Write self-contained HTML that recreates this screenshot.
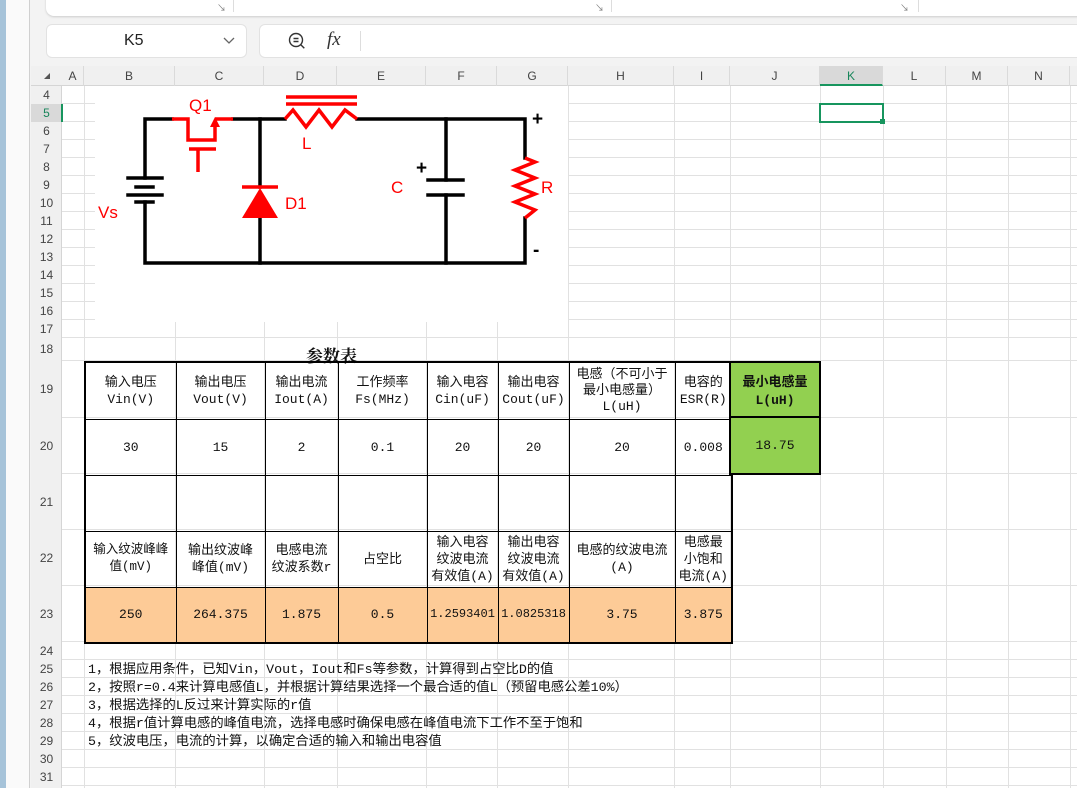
<!DOCTYPE html>
<html style="overflow:hidden"><head><meta charset="utf-8"><style>
*{margin:0;padding:0;box-sizing:border-box}
html,body{width:1077px;height:788px;overflow:hidden}
body{position:relative;background:#f3f3f3;font-family:"Liberation Sans","Noto Sans CJK SC",sans-serif}
.a{position:absolute}
.v{position:absolute;top:86px;height:702px;width:1px;background:#e1e1e1}
.h{position:absolute;left:62px;width:1015px;height:1px;background:#e1e1e1}
.ch{position:absolute;top:66px;height:20px;font-size:12px;color:#444;text-align:center;line-height:20px;border-right:1px solid #dadada}
.rh{position:absolute;left:31px;width:31px;font-size:12px;color:#444;text-align:center}
table{position:absolute;left:84px;top:361px;border-collapse:collapse;border:2px solid #000;font-family:"Liberation Mono","Noto Sans CJK SC",monospace;font-size:13px;color:#111;table-layout:fixed;width:647px}
td{border:1px solid #000;text-align:center;vertical-align:middle;line-height:17px;padding:0;overflow:hidden}
.pe td{background:#fdcb97}
.note{position:absolute;left:88px;white-space:nowrap;font-family:"Liberation Mono","Noto Sans CJK SC",monospace;font-size:13.3px;color:#111;line-height:18px}
</style></head><body>
<div class="a" style="left:0;top:0;width:6px;height:788px;background:#a6c3d9"></div>
<div class="a" style="left:6px;top:0;width:24px;height:788px;background:#fafafa;border-right:1px solid #d0d0d0"></div>
<div class="a" style="left:46px;top:-10px;width:1060px;height:26px;background:#fff;border-radius:8px;box-shadow:0 1px 2px #ccc"></div>
<div class="a" style="left:233px;top:0;width:1px;height:12px;background:#ddd"></div>
<div class="a" style="left:611px;top:0;width:1px;height:12px;background:#ddd"></div>
<div class="a" style="left:918px;top:0;width:1px;height:12px;background:#ddd"></div>
<div class="a" style="left:217px;top:1px;font-size:9px;color:#777">↘</div>
<div class="a" style="left:595px;top:1px;font-size:9px;color:#777">↘</div>
<div class="a" style="left:900px;top:1px;font-size:9px;color:#777">↘</div>
<div class="a" style="left:46px;top:24px;width:201px;height:34px;background:#fff;border:1px solid #e2e2e2;border-radius:6px"></div>
<div class="a" style="left:124px;top:32px;font-size:16px;color:#222">K5</div>
<svg class="a" style="left:222px;top:36px" width="14" height="10"><path d="M2 2 L7 7 L12 2" fill="none" stroke="#666" stroke-width="1.3"/></svg>
<div class="a" style="left:259px;top:24px;width:830px;height:34px;background:#fff;border:1px solid #e2e2e2;border-radius:6px"></div>
<svg class="a" style="left:286px;top:30px" width="22" height="22"><circle cx="10" cy="10" r="6.5" fill="none" stroke="#333" stroke-width="1.4"/><path d="M7.5 8.5h5M7.5 11.5h5M14.8 14.8l3.5 3.5" stroke="#333" stroke-width="1.4"/></svg>
<div class="a" style="left:327px;top:29px;font-size:19px;font-style:italic;font-family:'Liberation Serif',serif;color:#333">fx</div>
<div class="a" style="left:360px;top:31px;width:1px;height:20px;background:#ddd"></div>
<div class="a" style="left:31px;top:66px;width:1046px;height:20px;background:#f0f0f0;border-bottom:1px solid #d5d5d5"></div>
<div class="a" style="left:31px;top:86px;width:31px;height:702px;background:#f0f0f0;border-right:1px solid #d5d5d5"></div>
<svg class="a" style="left:43px;top:72px" width="8" height="8"><path d="M7 1 L7 7 L1 7Z" fill="#555"/></svg>
<div class="a" style="left:62px;top:86px;width:1015px;height:702px;background:#fff"></div>
<div class="ch" style="left:62px;width:22px">A</div>
<div class="ch" style="left:84px;width:91px">B</div>
<div class="ch" style="left:175px;width:89px">C</div>
<div class="ch" style="left:264px;width:73px">D</div>
<div class="ch" style="left:337px;width:89px">E</div>
<div class="ch" style="left:426px;width:71px">F</div>
<div class="ch" style="left:497px;width:71px">G</div>
<div class="ch" style="left:568px;width:106px">H</div>
<div class="ch" style="left:674px;width:56px">I</div>
<div class="ch" style="left:730px;width:90px">J</div>
<div class="ch" style="left:820px;width:63px;background:#d9d9d9;color:#17855a;border-bottom:2px solid #17955e">K</div>
<div class="ch" style="left:883px;width:63px">L</div>
<div class="ch" style="left:946px;width:62px">M</div>
<div class="ch" style="left:1008px;width:62px">N</div>
<div class="v" style="left:84px"></div><div class="v" style="left:175px"></div><div class="v" style="left:264px"></div><div class="v" style="left:337px"></div><div class="v" style="left:426px"></div><div class="v" style="left:497px"></div><div class="v" style="left:568px"></div><div class="v" style="left:674px"></div><div class="v" style="left:730px"></div><div class="v" style="left:820px"></div><div class="v" style="left:883px"></div><div class="v" style="left:946px"></div><div class="v" style="left:1008px"></div><div class="v" style="left:1070px"></div>
<div class="h" style="top:103px"></div><div class="h" style="top:121px"></div><div class="h" style="top:139px"></div><div class="h" style="top:157px"></div><div class="h" style="top:175px"></div><div class="h" style="top:193px"></div><div class="h" style="top:211px"></div><div class="h" style="top:229px"></div><div class="h" style="top:247px"></div><div class="h" style="top:265px"></div><div class="h" style="top:283px"></div><div class="h" style="top:301px"></div><div class="h" style="top:319px"></div><div class="h" style="top:337px"></div><div class="h" style="top:360px"></div><div class="h" style="top:417px"></div><div class="h" style="top:473px"></div><div class="h" style="top:529px"></div><div class="h" style="top:585px"></div><div class="h" style="top:641px"></div><div class="h" style="top:659px"></div><div class="h" style="top:677px"></div><div class="h" style="top:695px"></div><div class="h" style="top:713px"></div><div class="h" style="top:731px"></div><div class="h" style="top:749px"></div><div class="h" style="top:767px"></div><div class="h" style="top:785px"></div>
<div class="rh" style="top:86px;height:18px;line-height:18px">4</div>
<div class="a" style="left:31px;top:104px;width:31px;height:18px;background:#d9d9d9"></div>
<div class="a" style="left:61px;top:104px;width:2px;height:18px;background:#17955e"></div>
<div class="rh" style="top:104px;height:18px;line-height:18px;color:#17855a">5</div>
<div class="rh" style="top:122px;height:18px;line-height:18px">6</div>
<div class="rh" style="top:140px;height:18px;line-height:18px">7</div>
<div class="rh" style="top:158px;height:18px;line-height:18px">8</div>
<div class="rh" style="top:176px;height:18px;line-height:18px">9</div>
<div class="rh" style="top:194px;height:18px;line-height:18px">10</div>
<div class="rh" style="top:212px;height:18px;line-height:18px">11</div>
<div class="rh" style="top:230px;height:18px;line-height:18px">12</div>
<div class="rh" style="top:248px;height:18px;line-height:18px">13</div>
<div class="rh" style="top:266px;height:18px;line-height:18px">14</div>
<div class="rh" style="top:284px;height:18px;line-height:18px">15</div>
<div class="rh" style="top:302px;height:18px;line-height:18px">16</div>
<div class="rh" style="top:320px;height:18px;line-height:18px">17</div>
<div class="rh" style="top:338px;height:23px;line-height:23px">18</div>
<div class="rh" style="top:361px;height:57px;line-height:57px">19</div>
<div class="rh" style="top:418px;height:56px;line-height:56px">20</div>
<div class="rh" style="top:474px;height:56px;line-height:56px">21</div>
<div class="rh" style="top:530px;height:56px;line-height:56px">22</div>
<div class="rh" style="top:586px;height:56px;line-height:56px">23</div>
<div class="rh" style="top:642px;height:18px;line-height:18px">24</div>
<div class="rh" style="top:660px;height:18px;line-height:18px">25</div>
<div class="rh" style="top:678px;height:18px;line-height:18px">26</div>
<div class="rh" style="top:696px;height:18px;line-height:18px">27</div>
<div class="rh" style="top:714px;height:18px;line-height:18px">28</div>
<div class="rh" style="top:732px;height:18px;line-height:18px">29</div>
<div class="rh" style="top:750px;height:18px;line-height:18px">30</div>
<div class="rh" style="top:768px;height:18px;line-height:18px">31</div>
<div class="a" style="left:819px;top:103px;width:65px;height:20px;border:2px solid #17955e"></div>
<div class="a" style="left:880px;top:119px;width:5px;height:5px;background:#17955e"></div>
<svg class="a" style="left:95px;top:86px" width="473" height="236" viewBox="95 86 473 236">
<rect x="95" y="86" width="473" height="236" fill="#fff"/>
<g stroke="#000" stroke-width="3.5" fill="none" stroke-linecap="square">
<path d="M172 119 H145 V178"/><path d="M145 202 V263 H525 V218"/>
<path d="M233 119 H285"/><path d="M357 119 H525 V158"/>
<path d="M260 119 V187"/><path d="M260 218 V263"/>
<path d="M446 119 V180"/><path d="M446 195 V263"/>
<path d="M128 178 H162"/><path d="M136 187 H153"/><path d="M128 195 H162"/><path d="M136 202 H153"/>
<path d="M428 180 H463"/><path d="M428 195 H463"/>
</g>
<g stroke="#f00" stroke-width="3.5" fill="none">
<path d="M172 119 H188 V140 H215 V126"/><path d="M215 119 H233"/>
<path d="M189 149 H216"/><path d="M198 149 V172"/>
<path d="M242 187 H278"/>
<path d="M286 97 H357"/><path d="M286 104 H357"/>
<path d="M285 119 L293 110 L306 127 L319 110 L332 127 L345 110 L357 119"/>
<path d="M525 158 L535 162 L515 170 L535 178 L515 186 L535 194 L515 202 L535 210 L525 218"/>
</g>
<path d="M215 117 L210 127 L220 127Z" fill="#f00"/>
<path d="M260 188 L242 218 L278 218Z" fill="#f00"/>
<g font-family="Liberation Sans,sans-serif" font-size="17" fill="#f00">
<text x="189" y="111">Q1</text><text x="302" y="149">L</text><text x="98" y="218">Vs</text>
<text x="285" y="209">D1</text><text x="391" y="193">C</text><text x="541" y="193">R</text>
</g>
<g font-family="Liberation Sans,sans-serif" font-size="19" font-weight="bold" fill="#000">
<text x="532" y="125">+</text><text x="416" y="174">+</text><text x="533" y="256">-</text>
</g>
</svg>
<div class="a" style="left:306px;top:342px;font-family:'Noto Serif CJK SC',serif;font-weight:bold;font-size:17px;color:#111">参数表</div>
<table>
<colgroup><col style="width:91px"><col style="width:89px"><col style="width:73px"><col style="width:89px"><col style="width:71px"><col style="width:71px"><col style="width:106px"><col style="width:57px"></colgroup>
<tr style="height:57px"><td>输入电压<br>Vin(V)</td><td>输出电压<br>Vout(V)</td><td>输出电流<br>Iout(A)</td><td>工作频率<br>Fs(MHz)</td><td>输入电容<br>Cin(uF)</td><td>输出电容<br>Cout(uF)</td><td style="line-height:16px">电感（不可小于<br>最小电感量）<br>L(uH)</td><td>电容的<br>ESR(R)</td></tr>
<tr style="height:56px"><td>30</td><td>15</td><td>2</td><td>0.1</td><td>20</td><td>20</td><td>20</td><td>0.008</td></tr>
<tr style="height:56px"><td></td><td></td><td></td><td></td><td></td><td></td><td></td><td></td></tr>
<tr style="height:56px"><td style="font-size:12.5px">输入纹波峰峰<br>值(mV)</td><td>输出纹波峰<br>峰值(mV)</td><td>电感电流<br>纹波系数r</td><td>占空比</td><td style="line-height:17px">输入电容<br>纹波电流<br>有效值(A)</td><td style="line-height:17px">输出电容<br>纹波电流<br>有效值(A)</td><td>电感的纹波电流<br>(A)</td><td style="line-height:17px">电感最<br>小饱和<br>电流(A)</td></tr>
<tr class="pe" style="height:56px"><td>250</td><td>264.375</td><td>1.875</td><td>0.5</td><td style="font-size:12px">1.2593401</td><td style="font-size:12px">1.0825318</td><td>3.75</td><td>3.875</td></tr>
</table>
<div class="a" style="left:729px;top:361px;width:92px;height:114px;border:2px solid #000;background:#92d050;font-family:'Liberation Mono','Noto Sans CJK SC',monospace;font-size:13px;color:#111;text-align:center">
<div style="height:55px;border-bottom:2px solid #000;padding-top:11px;line-height:18px;font-weight:bold">最小电感量<br>L(uH)</div>
<div style="line-height:55px">18.75</div>
</div>
<div class="note" style="top:661px">1，根据应用条件，已知Vin，Vout，Iout和Fs等参数，计算得到占空比D的值</div>
<div class="note" style="top:679px">2，按照r=0.4来计算电感值L，并根据计算结果选择一个最合适的值L（预留电感公差10%）</div>
<div class="note" style="top:697px">3，根据选择的L反过来计算实际的r值</div>
<div class="note" style="top:715px">4，根据r值计算电感的峰值电流，选择电感时确保电感在峰值电流下工作不至于饱和</div>
<div class="note" style="top:733px">5，纹波电压，电流的计算，以确定合适的输入和输出电容值</div>
</body></html>
